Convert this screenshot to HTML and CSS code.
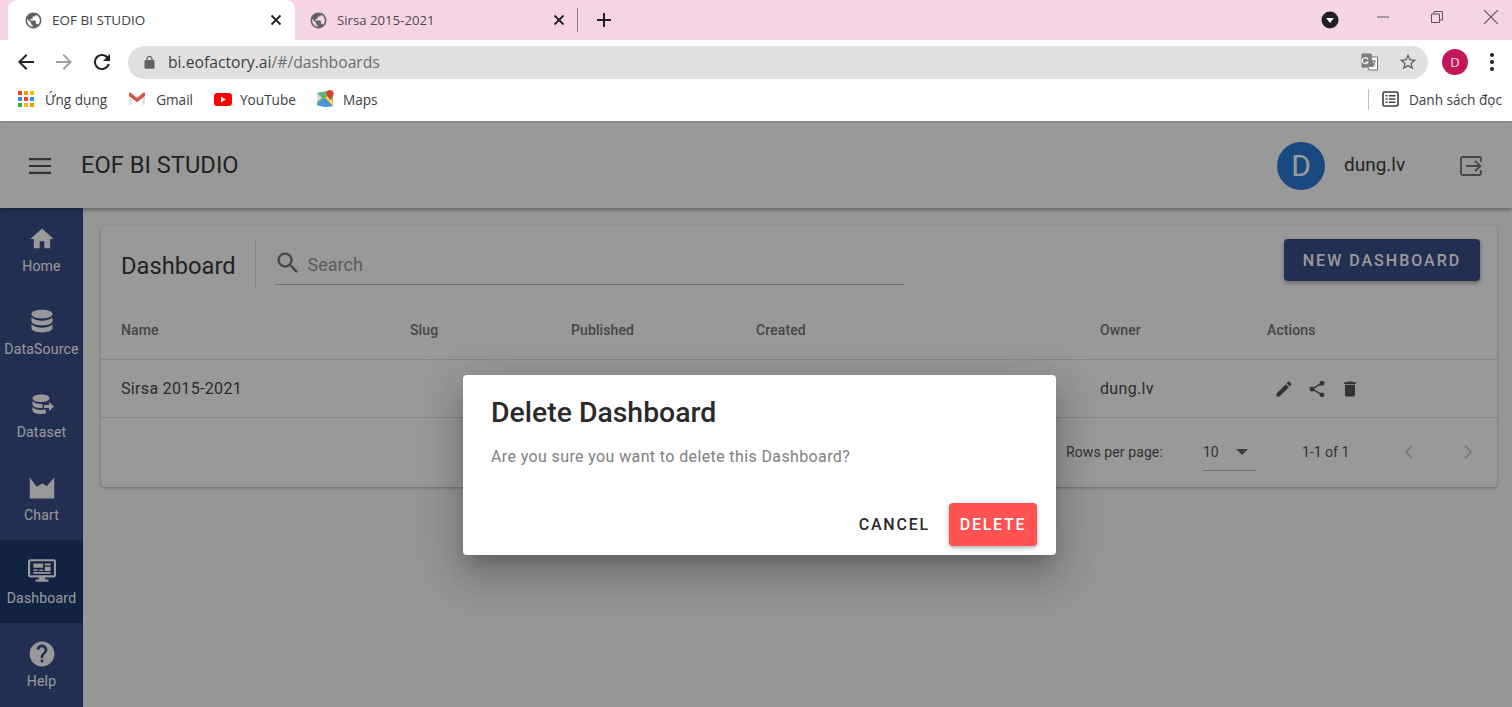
FILE: index.html
```html
<!DOCTYPE html>
<html lang="en">
<head>
  <meta charset="UTF-8">
  <meta name="viewport" content="width=device-width, initial-scale=1.0">
  <title>EOF BI STUDIO</title>
  <link rel="stylesheet" href="styles.css">
</head>
<body>
  <!-- Browser chrome -->
  <div class="tabstrip">
    <div class="tab tab-active">
      <svg class="tab-globe" viewBox="0 0 24 24"><path d="M12 2C6.48 2 2 6.48 2 12s4.48 10 10 10 10-4.48 10-10S17.52 2 12 2zm-1 17.93c-3.95-.49-7-3.85-7-7.93 0-.62.08-1.21.21-1.79L9 15v1c0 1.1.9 2 2 2v1.93zm6.9-2.54c-.26-.81-1-1.39-1.9-1.39h-1v-3c0-.55-.45-1-1-1H8v-2h2c.55 0 1-.45 1-1V7h2c1.1 0 2-.9 2-2v-.41c2.93 1.19 5 4.06 5 7.41 0 2.08-.8 3.97-2.1 5.39z"/></svg>
      <span class="tab-title">EOF BI STUDIO</span>
      <svg class="tab-close" viewBox="0 0 12 12"><path d="M1.5 1.5l9 9M10.5 1.5l-9 9"/></svg>
    </div>
    <div class="tab tab-other">
      <svg class="tab-globe" viewBox="0 0 24 24"><path d="M12 2C6.48 2 2 6.48 2 12s4.48 10 10 10 10-4.48 10-10S17.52 2 12 2zm-1 17.93c-3.95-.49-7-3.85-7-7.93 0-.62.08-1.21.21-1.79L9 15v1c0 1.1.9 2 2 2v1.93zm6.9-2.54c-.26-.81-1-1.39-1.9-1.39h-1v-3c0-.55-.45-1-1-1H8v-2h2c.55 0 1-.45 1-1V7h2c1.1 0 2-.9 2-2v-.41c2.93 1.19 5 4.06 5 7.41 0 2.08-.8 3.97-2.1 5.39z"/></svg>
      <span class="tab-title">Sirsa 2015-2021</span>
      <svg class="tab-close" viewBox="0 0 12 12"><path d="M1.5 1.5l9 9M10.5 1.5l-9 9"/></svg>
    </div>
    <div class="tab-sep"></div>
    <svg class="tab-new" viewBox="0 0 16 16"><path d="M8 1v14M1 8h14"/></svg>
    <div class="win-controls">
      <div class="media-btn"><svg viewBox="0 0 18 18"><circle cx="9" cy="9" r="8.5" fill="#202124"/><path d="M5.2 7h7.6L9 12z" fill="#fff"/></svg></div>
      <svg class="win-icon win-min" viewBox="0 0 12 12"><path d="M0 6h12"/></svg>
      <svg class="win-icon win-max" viewBox="0 0 12 12"><path d="M.5 3h8v8.5h-8zM3 3V.5h8.5V9H8.5"/></svg>
      <svg class="win-icon win-close" viewBox="0 0 12 12"><path d="M0 0l12 12M12 0L0 12"/></svg>
    </div>
  </div>

  <div class="navbar">
    <svg class="nav-icon" viewBox="0 0 24 24"><path d="M20 11H7.83l5.59-5.59L12 4l-8 8 8 8 1.41-1.41L7.83 13H20v-2z"/></svg>
    <svg class="nav-icon nav-disabled" viewBox="0 0 24 24"><path d="M4 11h12.17l-5.59-5.59L12 4l8 8-8 8-1.41-1.41L16.17 13H4v-2z"/></svg>
    <svg class="nav-icon" viewBox="0 0 24 24"><path d="M17.65 6.35C16.2 4.9 14.21 4 12 4c-4.42 0-7.99 3.58-7.99 8s3.57 8 7.99 8c3.73 0 6.84-2.55 7.73-6h-2.08c-.82 2.33-3.04 4-5.65 4-3.31 0-6-2.69-6-6s2.69-6 6-6c1.66 0 3.14.69 4.22 1.78L13 11h7V4l-2.35 2.35z"/></svg>
    <div class="omnibox">
      <svg class="lock" viewBox="0 0 24 24"><path d="M18 8h-1V6c0-2.76-2.24-5-5-5S7 3.24 7 6v2H6c-1.1 0-2 .9-2 2v10c0 1.1.9 2 2 2h12c1.1 0 2-.9 2-2V10c0-1.1-.9-2-2-2zM9 6c0-1.66 1.34-3 3-3s3 1.34 3 3v2H9V6z"/></svg>
      <span class="url">bi.eofactory.ai<span class="url-path">/#/dashboards</span></span>
      <svg class="translate" viewBox="0 0 18 18">
        <path d="M1 1h9l1 3h5.5v13H8l-1-3H1z" fill="#fff" stroke="#6f7275"/>
        <path d="M1 1h9l3 13H1z" fill="#7a7d80"/>
        <path d="M9 6.5A3 3 0 1 0 9 9H6.5" fill="none" stroke="#fff" stroke-width="1.2" transform="translate(-2 0)"/>
        <path d="M11 8h4M13 7v1M14 8c-.5 2-1.5 3.5-2.5 4.5M12 9.5c.7 1.3 1.5 2.2 2.6 3" fill="none" stroke="#6f7275"/>
      </svg>
      <svg class="star" viewBox="0 0 24 24"><path d="M22 9.24l-7.19-.62L12 2 9.19 8.63 2 9.24l5.46 4.73L5.82 21 12 17.27 18.18 21l-1.63-7.03L22 9.24zM12 15.4l-3.76 2.27 1-4.28-3.32-2.88 4.38-.38L12 6.1l1.71 4.04 4.38.38-3.32 2.88 1 4.28L12 15.4z"/></svg>
    </div>
    <div class="profile">D</div>
    <div class="kebab"><i></i><i></i><i></i></div>
  </div>

  <div class="bookmarks">
    <div class="apps-grid">
      <i class="r"></i><i class="o"></i><i class="y"></i>
      <i class="b"></i><i class="r"></i><i class="b"></i>
      <i class="g"></i><i class="y"></i><i class="o"></i>
    </div>
    <span class="bm-text bm-apps">Ứng dụng</span>
    <svg class="bm-icon bm-gmail" viewBox="0 0 18 14">
      <path d="M1 13V1.5l8 6.5 8-6.5V13h-3V5.5L9 9.6 4 5.5V13z" fill="#e4e4e4"/>
      <path d="M1 4V1.5C1 .6 2 .2 2.8.8L9 6l6.2-5.2c.8-.6 1.8-.2 1.8.7V4l-8 6.2z" fill="#d9534b"/>
    </svg>
    <span class="bm-text bm-mail">Gmail</span>
    <svg class="bm-icon bm-yt" viewBox="0 0 18 13">
      <rect width="18" height="13" rx="3.2" fill="#f00"/>
      <path d="M7 3.7v5.6l5-2.8z" fill="#fff"/>
    </svg>
    <span class="bm-text bm-tube">YouTube</span>
    <svg class="bm-icon bm-maps" viewBox="0 0 18 18">
      <path d="M1 3l10-2 6 1v14l-8 1-8-2z" fill="#5fb571"/>
      <path d="M1 15L9 8l8 8-8 1z" fill="#4d8fe6"/>
      <path d="M9 8l8 8v-5l-5-6z" fill="#f3d34a"/>
      <path d="M1 3l5 5-5 4z" fill="#ddd"/>
      <path d="M14 0a3.6 3.6 0 0 1 3.6 3.6C17.6 6 15 8 14 10c-1-2-3.6-4-3.6-6.4A3.6 3.6 0 0 1 14 0z" fill="#d8412f"/>
    </svg>
    <span class="bm-text">Maps</span>
    <div class="bm-right">
      <div class="bm-sep"></div>
      <svg class="reading" viewBox="0 0 17 16">
        <rect x="1" y="1" width="15" height="14" rx="1.5" fill="none" stroke="#3c4043" stroke-width="1.6"/>
        <path d="M3.6 4.7h2M7 4.7h6.5M3.6 8h2M7 8h6.5M3.6 11.3h2M7 11.3h6.5" stroke="#3c4043" stroke-width="1.6"/>
      </svg>
      <span class="bm-text">Danh sách đọc</span>
    </div>
  </div>

  <!-- The app itself -->
  <div class="app">
    <header class="app-header">
      <svg class="menu-icon" viewBox="0 0 22 16"><path d="M0 0h22v2.2H0zM0 6.9h22v2.2H0zM0 13.8h22V16H0z"/></svg>
      <div class="app-title">EOF BI STUDIO</div>
      <div class="user-box">
        <div class="user-avatar">D</div>
        <div class="user-name">dung.lv</div>
        <svg class="logout" viewBox="0 0 22 20">
          <path d="M21 6V2.5C21 1.7 20.3 1 19.5 1h-17C1.7 1 1 1.7 1 2.5v15c0 .8.7 1.5 1.5 1.5h17c.8 0 1.5-.7 1.5-1.5V14" fill="none" stroke="#777" stroke-width="1.8"/>
          <path d="M6 10h14M15 5l5.5 5-5.5 5" fill="none" stroke="#777" stroke-width="1.8"/>
        </svg>
      </div>
    </header>

    <div class="app-body">
      <nav class="sidebar">
        <a class="side-item">
          <svg viewBox="0 0 24 24"><path d="M10 20v-6h4v6h5v-8h3L12 3 2 12h3v8z"/></svg>
          <span>Home</span>
        </a>
        <a class="side-item">
          <svg viewBox="0 0 24 24"><path d="M12 1.5c-5 0-9 1.5-9 3.7S7 9 12 9s9-1.6 9-3.8-4-3.7-9-3.7zM3 7.9v3.3c0 2.2 4 3.8 9 3.8s9-1.6 9-3.8V7.9c-1.6 2-5.2 3-9 3s-7.4-1-9-3zM3 13.9v3.3c0 2.2 4 3.8 9 3.8s9-1.6 9-3.8v-3.3c-1.6 2-5.2 3-9 3s-7.4-1-9-3z"/></svg>
          <span>DataSource</span>
        </a>
        <a class="side-item">
          <svg viewBox="-2 -2 28 28"><path d="M11 1.5c-4.7 0-8.5 1.5-8.5 3.7S6.300 9 11 9s8.5-1.6 8.5-3.8-3.8-3.700-8.5-3.700zM2.500 7.900v3.300c0 2.200 3.800 3.800 8.500 3.800h1.500v-4.100H11c-3.600 0-7-1-8.500-3zM2.500 13.900v3.300c0 2.200 3.800 3.800 8.500 3.800 2 0 3.800-.3 5.200-.8l-.9-3.900c-1.300.4-2.800.6-4.300.6-3.600 0-7-1-8.500-3z"/><path d="M14 12h5V9l5 4.500-5 4.500v-3h-5z"/></svg>
          <span>Dataset</span>
        </a>
        <a class="side-item">
          <svg viewBox="0 0 24 24"><path d="M1.500 21V3l6 8 5-3 3.500 2.500L22.500 3v18z"/></svg>
          <span>Chart</span>
        </a>
        <a class="side-item side-active">
          <svg viewBox="0 0 26 24"><path fill-rule="evenodd" d="M2 1h22a2 2 0 0 1 2 2v13a2 2 0 0 1-2 2h-8v2h3v2H7v-2h3v-2H2a2 2 0 0 1-2-2V3a2 2 0 0 1 2-2zm0 2v13h22V3zM5 5h9v4H5zm10.500 0H21v2h-5.500zm0 3H21v4h-5.500zM5 10.500h4V12H5zm5.500 0H14V12h-3.500zM5 13h16v1.500H5z"/></svg>
          <span>Dashboard</span>
        </a>
        <a class="side-item">
          <svg viewBox="-1.500 -1.500 27 27"><path d="M12 0C5.400 0 0 5.400 0 12s5.400 12 12 12 12-5.400 12-12S18.600 0 12 0zm1.300 20h-2.600v-2.600h2.600V20zm2.700-9.200l-1.200 1.200c-1 1-1.500 1.800-1.500 3.800h-2.600v-.7c0-1.400.6-2.700 1.500-3.700l1.600-1.600c.5-.5.800-1.100.8-1.800 0-1.400-1.200-2.600-2.600-2.600S9.400 6.600 9.400 8H6.800c0-2.900 2.300-5.200 5.200-5.200s5.200 2.300 5.200 5.200c0 1.100-.5 2.100-1.200 2.800z"/></svg>
          <span>Help</span>
        </a>
      </nav>

      <main class="content">
        <section class="card">
          <div class="card-toolbar">
            <h2 class="card-title">Dashboard</h2>
            <div class="card-divider"></div>
            <div class="search-box">
              <svg viewBox="0 0 24 24"><path d="M15.5 14h-.79l-.28-.27C15.41 12.59 16 11.11 16 9.5 16 5.91 13.09 3 9.5 3S3 5.91 3 9.5 5.91 16 9.5 16c1.61 0 3.09-.59 4.23-1.57l.27.28v.79l5 4.99L20.49 19l-4.99-5zm-6 0C7.01 14 5 11.99 5 9.5S7.01 5 9.5 5 14 7.01 14 9.5 11.99 14 9.5 14z"/></svg>
              <span class="search-hint">Search</span>
            </div>
            <button class="btn-new">NEW DASHBOARD</button>
          </div>

          <div class="table-row table-head">
            <div>Name</div><div>Slug</div><div>Published</div><div>Created</div><div>Owner</div><div>Actions</div>
          </div>
          <div class="table-row table-data">
            <div>Sirsa 2015-2021</div><div></div><div></div><div></div><div>dung.lv</div>
            <div class="row-actions">
              <svg viewBox="0 0 24 24"><path d="M3 17.25V21h3.75L17.81 9.94l-3.75-3.75L3 17.25zM20.71 7.04c.39-.39.39-1.02 0-1.41l-2.34-2.34c-.39-.39-1.02-.39-1.41 0l-1.83 1.83 3.75 3.75 1.83-1.83z"/></svg>
              <svg viewBox="0 0 24 24"><path d="M18 16.08c-.76 0-1.44.3-1.96.77L8.91 12.7c.05-.23.09-.46.09-.7s-.04-.47-.09-.7l7.05-4.11c.54.5 1.25.81 2.04.81 1.66 0 3-1.34 3-3s-1.34-3-3-3-3 1.34-3 3c0 .24.04.47.09.7L8.04 9.81C7.5 9.31 6.79 9 6 9c-1.66 0-3 1.34-3 3s1.34 3 3 3c.79 0 1.5-.31 2.04-.81l7.12 4.16c-.05.21-.08.43-.08.65 0 1.61 1.31 2.92 2.92 2.92s2.92-1.31 2.92-2.92-1.31-2.92-2.92-2.92z"/></svg>
              <svg viewBox="0 0 24 24"><path d="M6 19c0 1.1.9 2 2 2h8c1.1 0 2-.9 2-2V7H6v12zM19 4h-3.5l-1-1h-5l-1 1H5v2h14V4z"/></svg>
            </div>
          </div>

          <div class="pager">
            <span class="pager-label">Rows per page:</span>
            <div class="pager-select"><span>10</span><i class="caret"></i></div>
            <span class="pager-count">1-1 of 1</span>
            <svg class="pager-arrow" viewBox="0 0 12 16"><path d="M9 1.5L3 8l6 6.5"/></svg>
            <svg class="pager-arrow" viewBox="0 0 12 16"><path d="M3 1.5L9 8l-6 6.5"/></svg>
          </div>
        </section>
      </main>
    </div>

    <div class="backdrop">
      <div class="dialog">
        <h3 class="dialog-title">Delete Dashboard</h3>
        <p class="dialog-text">Are you sure you want to delete this Dashboard?</p>
        <div class="dialog-actions">
          <button class="btn-cancel">CANCEL</button>
          <button class="btn-delete">DELETE</button>
        </div>
      </div>
    </div>
  </div>
</body>
</html>
```

FILE: styles.css
```css
* {
  box-sizing: border-box;
}

html, body {
  height: 100%;
}

body {
  margin: 0;
  display: flex;
  flex-direction: column;
  height: 707px;
  overflow: hidden;
  background: white;
  font-family: Roboto, "Liberation Sans", sans-serif;
}

/* Browser chrome */
.tabstrip {
  display: flex;
  align-items: center;
  height: 40px;
  padding-left: 8px;
  background: #f5d5e5;
  flex-shrink: 0;
}

.tab {
  display: flex;
  align-items: center;
  width: 283px;
  height: 40px;
  padding: 0 13px 0 16px;
  font: 13.5px "Open Sans", sans-serif;
  color: #50474c;
}

.tab-active {
  width: 287px;
  background: white;
  border-radius: 9px 9px 0 0;
  color: #3c4043;
}

.tab-other {
  padding-left: 14px;
  font-size: 13.2px;
}

.tab-globe {
  width: 19px;
  height: 19px;
  fill: #5f6368;
}

.tab-title {
  margin-left: 9px;
  flex: 1;
}

.tab-close {
  width: 12px;
  height: 12px;
  fill: none;
  stroke: #202124;
  stroke-width: 1.8;
}

.tab-sep {
  width: 1px;
  height: 24px;
  margin-left: -1px;
  background: #8b8086;
}

.tab-new {
  width: 16px;
  height: 16px;
  margin-left: 18px;
  fill: none;
  stroke: #202124;
  stroke-width: 2;
}

.win-controls {
  display: flex;
  align-items: center;
  margin-left: auto;
}

.media-btn {
  width: 18px;
  height: 18px;
  margin-right: 38px;
}

.media-btn svg {
  display: block;
  width: 18px;
  height: 18px;
}

.win-icon {
  width: 12px;
  height: 12px;
  margin-top: -6px;
  fill: none;
  stroke: #5a5458;
  stroke-width: 1;
}

.win-min {
  margin-right: 42px;
}

.win-max {
  margin-right: 41px;
}

.win-close {
  width: 14px;
  height: 14px;
  margin-right: 14px;
}

.navbar {
  display: flex;
  align-items: center;
  height: 45px;
  padding: 0 0 1px 14px;
  background: white;
  flex-shrink: 0;
}

.nav-icon {
  width: 24px;
  height: 24px;
  margin-right: 14px;
  fill: #202124;
}

.nav-disabled {
  fill: #a0a3a6;
}

.omnibox {
  display: flex;
  align-items: center;
  width: 1300px;
  height: 33px;
  padding: 0 10px 0 14px;
  background: #e0e0e0;
  border-radius: 17px;
}

.lock {
  width: 15px;
  height: 15px;
  fill: #5f6368;
}

.url {
  margin-left: 11px;
  flex: 1;
  font: 15.7px "Open Sans", sans-serif;
  color: #3c4043;
}

.url-path {
  color: #6a6e72;
}

.translate {
  width: 18px;
  height: 18px;
  margin-right: 19px;
}

.star {
  width: 20px;
  height: 20px;
  fill: #5f6368;
}

.profile {
  display: flex;
  align-items: center;
  justify-content: center;
  width: 26px;
  height: 26px;
  margin-left: 14px;
  background: #c2185b;
  border-radius: 50%;
  color: #f4dfe8;
  font: 13px "Open Sans", sans-serif;
}

.kebab {
  display: flex;
  flex-direction: column;
  gap: 3px;
  margin-left: 22px;
}

.kebab i {
  width: 4px;
  height: 4px;
  background: #202124;
  border-radius: 50%;
}

.bookmarks {
  display: flex;
  align-items: center;
  height: 36px;
  padding: 0 0 8px 18px;
  background: white;
  flex-shrink: 0;
}

.apps-grid {
  display: grid;
  grid-template-columns: repeat(3, 4px);
  grid-auto-rows: 4px;
  gap: 2px;
  margin-right: 11px;
}

.apps-grid i.r { background: #ea4335; }
.apps-grid i.o { background: #f29900; }
.apps-grid i.y { background: #fbbc04; }
.apps-grid i.b { background: #4285f4; }
.apps-grid i.g { background: #34a853; }

.bm-text {
  font: 13.6px "Open Sans", sans-serif;
  color: #3c4043;
}

.bm-apps,
.bm-mail {
  margin-right: 21px;
}

.bm-tube {
  margin-right: 20px;
}

.bm-icon {
  width: 18px;
  margin-right: 10px;
}

.bm-yt {
  margin-right: 8px;
}

.bm-maps {
  margin-right: 9px;
}

.bm-right {
  display: flex;
  align-items: center;
  margin-left: auto;
  padding-right: 10px;
}

.bm-sep {
  width: 1px;
  height: 21px;
  margin-right: 13px;
  background: #bdc1c6;
}

.reading {
  width: 17px;
  height: 16px;
  margin-right: 10px;
}

/* App */
.app {
  position: relative;
  display: flex;
  flex-direction: column;
  flex: 1;
  min-height: 0;
  border-top: 2px solid #8f8f8f;
  background: #fafafa;
}

.app-header {
  display: flex;
  align-items: center;
  height: 85px;
  padding: 0 30px 0 29px;
  background: white;
  box-shadow: 0 2px 4px rgba(0, 0, 0, 0.35);
  flex-shrink: 0;
  position: relative;
  z-index: 1;
}

.menu-icon {
  width: 22px;
  height: 16px;
  fill: #555;
}

.app-title {
  margin: -2px 0 0 30px;
  font-size: 23.7px;
  color: #3a3a3a;
}

.user-box {
  display: flex;
  align-items: center;
  margin-left: auto;
}

.user-avatar {
  display: flex;
  align-items: center;
  justify-content: center;
  width: 48px;
  height: 48px;
  background: #2b7bd5;
  border-radius: 50%;
  color: white;
  font-size: 30px;
}

.user-name {
  width: 116px;
  margin: -2px 0 0 19px;
  font-size: 19px;
  color: #3a3a3a;
}

.logout {
  width: 22px;
  height: 20px;
}

.app-body {
  display: flex;
  flex: 1;
  min-height: 0;
}

.sidebar {
  width: 83px;
  background: #3a4e89;
  flex-shrink: 0;
}

.side-item {
  display: flex;
  flex-direction: column;
  align-items: center;
  height: 83px;
  padding-top: 17px;
  color: white;
  font-size: 14px;
  line-height: 16px;
  letter-spacing: 0.2px;
}

.side-item svg {
  width: 28px;
  height: 28px;
  margin-bottom: 5px;
  fill: white;
}

.side-active {
  background: #1e3a70;
}

.content {
  flex: 1;
  min-width: 0;
  padding: 18px 15px 0 18px;
}

.card {
  background: white;
  border-radius: 4px;
  box-shadow: 0 1px 3px rgba(0, 0, 0, 0.3);
}

.card-toolbar {
  display: flex;
  align-items: flex-start;
  height: 75px;
  padding: 13px 17px 0 20px;
}

.card-title {
  margin: 13px 0 0;
  font-size: 23.7px;
  font-weight: 400;
  color: #3a3a3a;
}

.card-divider {
  width: 1px;
  height: 48px;
  margin: 2px 19px 0;
  background: #d8d8d8;
}

.search-box {
  display: flex;
  align-items: center;
  width: 629px;
  height: 46px;
  border-bottom: 1px solid #b7b7b7;
}

.search-box svg {
  width: 28px;
  height: 28px;
  margin: 3px 6px 0 -1px;
  fill: #777;
}

.search-hint {
  margin-top: 5px;
  font-size: 18px;
  color: #999;
}

.btn-new {
  margin-left: auto;
  padding-top: 2px;
  width: 196px;
  height: 42px;
  background: #3a4e89;
  border: none;
  border-radius: 4px;
  box-shadow: 0 2px 4px rgba(0, 0, 0, 0.35);
  color: white;
  font: 500 16px Roboto, sans-serif;
  letter-spacing: 2px;
}

.table-row {
  display: grid;
  grid-template-columns: 289px 161px 185px 344px 167px 1fr;
  align-items: center;
  padding-left: 20px;
  border-bottom: 1px solid #e0e0e0;
}

.table-head {
  height: 59px;
  font-size: 14px;
  font-weight: 500;
  letter-spacing: 0.1px;
  color: #757575;
}

.table-data {
  height: 58px;
  font-size: 16px;
  letter-spacing: 0.33px;
  color: #4a4a4a;
}

.row-actions {
  display: flex;
  gap: 13px;
  padding-left: 7px;
}

.row-actions svg {
  width: 20px;
  height: 20px;
  fill: #555;
}

.pager {
  display: flex;
  align-items: center;
  height: 69px;
  padding: 0 0 2px 965px;
  font-size: 14px;
  color: #555;
}

.pager-label {
  width: 137px;
  white-space: nowrap;
  letter-spacing: 0.1px;
}

.pager-select {
  display: flex;
  align-items: center;
  justify-content: space-between;
  width: 53px;
  height: 38px;
  margin-top: 1px;
  padding-right: 8px;
  border-bottom: 1px solid #b7b7b7;
}

.caret {
  border: 6px solid transparent;
  border-top-color: #666;
  border-bottom: none;
}

.pager-count {
  width: 101px;
  margin-left: 46px;
}

.pager-arrow {
  width: 12px;
  height: 16px;
  fill: none;
  stroke: #c8c8c8;
  stroke-width: 1.8;
}

.pager-arrow + .pager-arrow {
  margin-left: 47px;
}

/* Dialog over a dimmed page */
.backdrop {
  position: absolute;
  top: 0;
  left: 0;
  right: 0;
  bottom: 0;
  z-index: 5;
  display: flex;
  justify-content: center;
  align-items: flex-start;
  padding: 252px 0 0 7px;
  background: rgba(0, 0, 0, 0.4);
}

.dialog {
  width: 593px;
  height: 180px;
  padding: 20px 19px 0 28px;
  background: white;
  border-radius: 4px;
  box-shadow: 0 11px 15px -7px rgba(0, 0, 0, 0.2), 0 24px 38px 3px rgba(0, 0, 0, 0.14), 0 9px 46px 8px rgba(0, 0, 0, 0.12);
}

.dialog-title {
  margin: 0;
  font-size: 28.4px;
  font-weight: 500;
  line-height: 36px;
  color: #2a2a2a;
}

.dialog-text {
  margin: 14px 0 0;
  font-size: 16px;
  line-height: 24px;
  letter-spacing: 0.38px;
  color: #808080;
}

.dialog-actions {
  display: flex;
  justify-content: flex-end;
  align-items: center;
  gap: 19px;
  margin-top: 34px;
}

.btn-cancel {
  padding: 0;
  background: none;
  border: none;
  color: #2a2a2a;
  font: 500 16px Roboto, sans-serif;
  letter-spacing: 1.8px;
}

.btn-delete {
  width: 88px;
  height: 43px;
  background: #ff5252;
  border: none;
  border-radius: 4px;
  box-shadow: 0 2px 4px rgba(0, 0, 0, 0.3);
  color: white;
  font: 500 16px Roboto, sans-serif;
  letter-spacing: 1.7px;
}
```
